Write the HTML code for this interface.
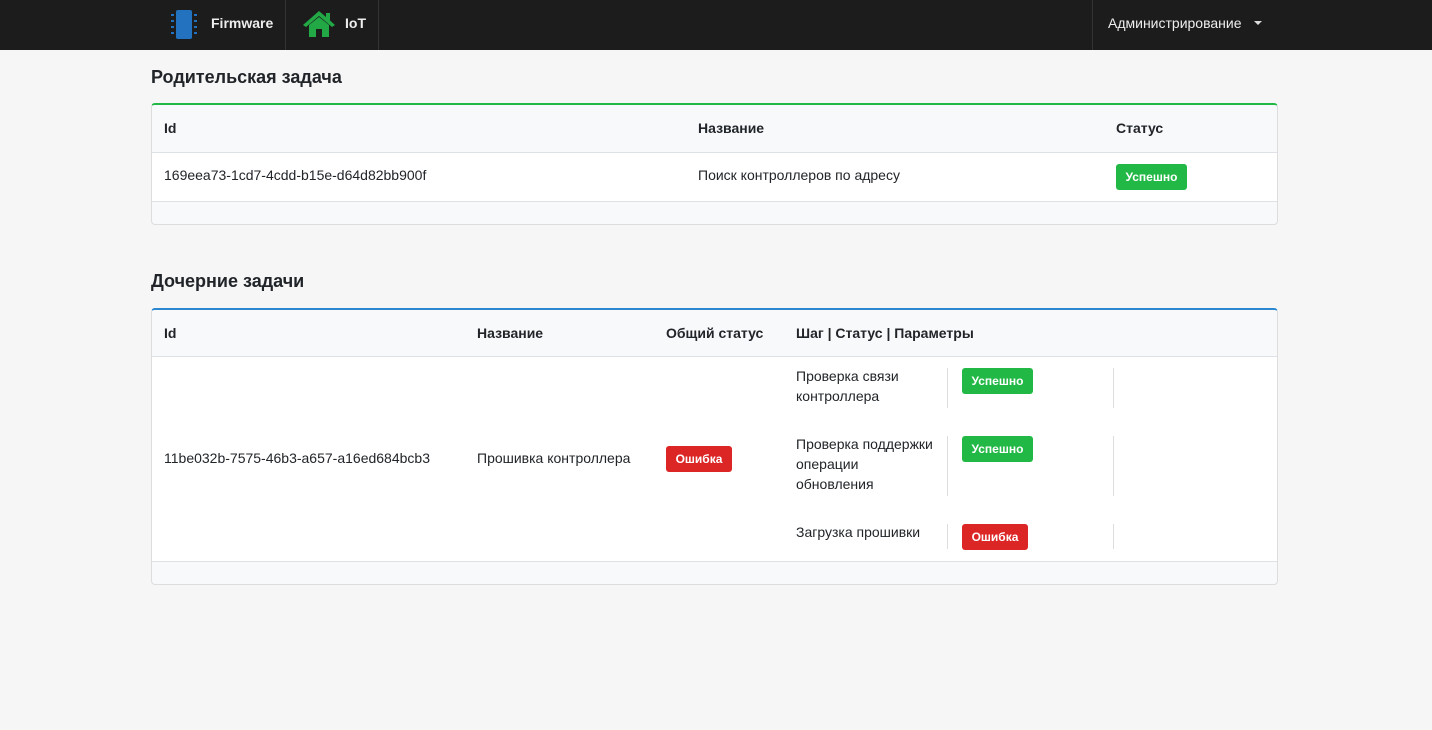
<!DOCTYPE html>
<html><head><meta charset="utf-8"><style>
*{box-sizing:border-box;margin:0;padding:0}
body{width:1432px;height:730px;background:#f6f6f6;font-family:"Liberation Sans","DejaVu Sans",sans-serif;color:#212529;position:relative;overflow:hidden;font-size:14px}
.nav{position:absolute;left:0;top:0;width:1432px;height:50px;background:#1c1c1c}
.nav .sep{position:absolute;top:0;width:1px;height:50px;background:#333}
.nav .t{position:absolute;top:15px;color:#eee;font-weight:bold;font-size:14px}
.a{position:absolute}
h2{position:absolute;font-size:18px;font-weight:bold;color:#212529}
.card{position:absolute;left:151px;width:1127px;background:#f8f9fa;border:1px solid #ddd;border-radius:4px;overflow:hidden}
.hdr{position:absolute;left:0;right:0;top:0;background:#f8f9fa;border-bottom:1px solid #dee2e6}
.body{position:absolute;left:0;right:0;background:#fff;border-bottom:1px solid #dee2e6}
.th{position:absolute;font-weight:bold;font-size:14px}
.td{position:absolute;font-size:14px;line-height:20px}
.b{position:absolute;color:#fff;font-weight:bold;font-size:12px;height:26px;line-height:26px;text-align:center;border-radius:3px}
.g{background:#22b845}.r{background:#dc2626}
.vl{position:absolute;width:1px;background:#ddd}
</style></head><body>
<div class="nav">
<svg class="a" style="left:170px;top:10px" width="28" height="30" viewBox="0 0 28 30"><rect x="6" y="0" width="16" height="29" rx="2" fill="#2272c0"/><g fill="#2272c0"><rect x="1" y="4" width="3" height="2"/><rect x="1" y="10" width="3" height="2"/><rect x="1" y="16" width="3" height="2"/><rect x="1" y="22" width="3" height="2"/><rect x="24" y="4" width="3" height="2"/><rect x="24" y="10" width="3" height="2"/><rect x="24" y="16" width="3" height="2"/><rect x="24" y="22" width="3" height="2"/></g></svg>
<div class="t" style="left:211px">Firmware</div>
<div class="sep" style="left:285px"></div>
<svg class="a" style="left:303px;top:10px" width="32" height="27" viewBox="0 0 32 27"><path d="M16 1 L0 15 L3 17 L16 6 L29 17 L32 15 L27 10.5 V3 H23 V7 Z" fill="#22a845"/><path d="M6 15 L16 7 L26 15 V27 H19 V19 H13 V27 H6 Z" fill="#22a845"/></svg>
<div class="t" style="left:345px">IoT</div>
<div class="sep" style="left:378px"></div>
<div class="sep" style="left:1092px"></div>
<div class="t" style="left:1108px;font-weight:normal">Администрирование</div>
<div class="a" style="left:1254px;top:21px;border-left:4px solid transparent;border-right:4px solid transparent;border-top:4px solid #ddd"></div>
</div>

<h2 style="left:151px;top:67px">Родительская задача</h2>
<div class="card" style="top:103px;height:122px;border-top:2px solid #22b845">
<div class="hdr" style="height:48px"></div>
<div class="th" style="left:12px;top:15px">Id</div>
<div class="th" style="left:546px;top:15px">Название</div>
<div class="th" style="left:964px;top:15px">Статус</div>
<div class="body" style="top:48px;height:49px"></div>
<div class="td" style="left:12px;top:60px">169eea73-1cd7-4cdd-b15e-d64d82bb900f</div>
<div class="td" style="left:546px;top:60px">Поиск контроллеров по адресу</div>
<div class="b g" style="left:964px;top:59px;width:71px">Успешно</div>
</div>

<h2 style="left:151px;top:271px">Дочерние задачи</h2>
<div class="card" style="top:308px;height:277px;border-top:2px solid #2a87d0">
<div class="hdr" style="height:47px"></div>
<div class="th" style="left:12px;top:15px">Id</div>
<div class="th" style="left:325px;top:15px">Название</div>
<div class="th" style="left:514px;top:15px">Общий статус</div>
<div class="th" style="left:644px;top:15px">Шаг | Статус | Параметры</div>
<div class="body" style="top:47px;height:205px"></div>
<div class="td" style="left:12px;top:138px">11be032b-7575-46b3-a657-a16ed684bcb3</div>
<div class="td" style="left:325px;top:138px">Прошивка контроллера</div>
<div class="b r" style="left:514px;top:136px;width:66px">Ошибка</div>
<div class="td" style="left:644px;top:56px">Проверка связи<br>контроллера</div>
<div class="vl" style="left:795px;top:58px;height:40px"></div>
<div class="b g" style="left:810px;top:58px;width:71px">Успешно</div>
<div class="vl" style="left:961px;top:58px;height:40px"></div>
<div class="td" style="left:644px;top:124px">Проверка поддержки<br>операции<br>обновления</div>
<div class="vl" style="left:795px;top:126px;height:60px"></div>
<div class="b g" style="left:810px;top:126px;width:71px">Успешно</div>
<div class="vl" style="left:961px;top:126px;height:60px"></div>
<div class="td" style="left:644px;top:212px">Загрузка прошивки</div>
<div class="vl" style="left:795px;top:214px;height:25px"></div>
<div class="b r" style="left:810px;top:214px;width:66px">Ошибка</div>
<div class="vl" style="left:961px;top:214px;height:25px"></div>
</div>
</body></html>
